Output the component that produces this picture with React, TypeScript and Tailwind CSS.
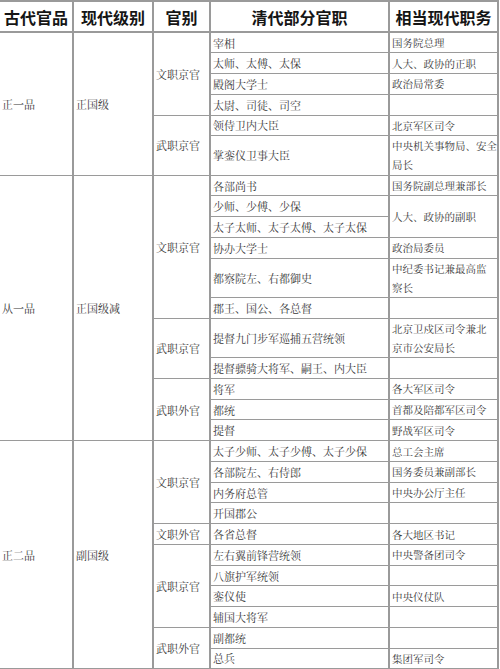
type Row = {
  title: string;
  modern?: string | string[] | null;
  modernSpan?: number;
  tall?: boolean;
};

type Section = { type: string; rows: Row[] };
type Group = { rank: string; level: string; sections: Section[] };

const groups: Group[] = [
  {
    rank: "正一品",
    level: "正国级",
    sections: [
      {
        type: "文职京官",
        rows: [
          { title: "宰相", modern: "国务院总理" },
          { title: "太师、太傅、太保", modern: "人大、政协的正职" },
          { title: "殿阁大学士", modern: "政治局常委" },
          { title: "太尉、司徒、司空", modern: "" },
        ],
      },
      {
        type: "武职京官",
        rows: [
          { title: "领侍卫内大臣", modern: "北京军区司令" },
          { title: "掌銮仪卫事大臣", modern: ["中央机关事物局、安全", "局长"], tall: true },
        ],
      },
    ],
  },
  {
    rank: "从一品",
    level: "正国级减",
    sections: [
      {
        type: "文职京官",
        rows: [
          { title: "各部尚书", modern: "国务院副总理兼部长" },
          { title: "少师、少傅、少保", modern: "人大、政协的副职", modernSpan: 2 },
          { title: "太子太师、太子太傅、太子太保", modern: null },
          { title: "协办大学士", modern: "政治局委员" },
          { title: "都察院左、右都御史", modern: ["中纪委书记兼最高监", "察长"], tall: true },
          { title: "郡王、国公、各总督", modern: "" },
        ],
      },
      {
        type: "武职京官",
        rows: [
          { title: "提督九门步军巡捕五营统领", modern: ["北京卫戍区司令兼北", "京市公安局长"], tall: true },
          { title: "提督骠骑大将军、嗣王、内大臣", modern: "" },
        ],
      },
      {
        type: "武职外官",
        rows: [
          { title: "将军", modern: "各大军区司令" },
          { title: "都统", modern: "首都及陪都军区司令" },
          { title: "提督", modern: "野战军区司令" },
        ],
      },
    ],
  },
  {
    rank: "正二品",
    level: "副国级",
    sections: [
      {
        type: "文职京官",
        rows: [
          { title: "太子少师、太子少傅、太子少保", modern: "总工会主席" },
          { title: "各部院左、右侍郎", modern: "国务委员兼副部长" },
          { title: "内务府总管", modern: "中央办公厅主任" },
          { title: "开国郡公", modern: "" },
        ],
      },
      {
        type: "文职外官",
        rows: [{ title: "各省总督", modern: "各大地区书记" }],
      },
      {
        type: "武职京官",
        rows: [
          { title: "左右翼前锋营统领", modern: "中央警备团司令" },
          { title: "八旗护军统领", modern: "" },
          { title: "銮仪使", modern: "中央仪仗队" },
          { title: "辅国大将军", modern: "" },
        ],
      },
      {
        type: "武职外官",
        rows: [
          { title: "副都统", modern: "" },
          { title: "总兵", modern: "集团军司令" },
        ],
      },
    ],
  },
];

const headers = ["古代官品", "现代级别", "官别", "清代部分官职", "相当现代职务"];

const cell = "border-y border-x-2 border-[#9a9a9a] px-[2px] py-0 text-left align-middle";

export default function App() {
  const body: React.ReactNode[] = [];

  groups.forEach((group, gi) => {
    const groupRows = group.sections.reduce((n, s) => n + s.rows.length, 0);
    group.sections.forEach((section, si) => {
      section.rows.forEach((row, ri) => {
        const firstInGroup = si === 0 && ri === 0;
        body.push(
          <tr className={row.tall ? "h-[39.4px]" : "h-[20.75px]"} key={`${gi}-${si}-${ri}`}>
            {firstInGroup ? (
              <td className={`${cell} border-l-0`} rowSpan={groupRows}>
                {group.rank}
              </td>
            ) : null}
            {firstInGroup ? (
              <td className={cell} rowSpan={groupRows}>
                {group.level}
              </td>
            ) : null}
            {ri === 0 ? (
              <td className={cell} rowSpan={section.rows.length}>
                {section.type}
              </td>
            ) : null}
            <td className={`${cell} whitespace-nowrap`}>{row.title}</td>
            {row.modern === null ? null : (
              <td
                className={`${cell} whitespace-nowrap text-[10.5px] leading-[19px]`}
                rowSpan={row.modernSpan ?? 1}
              >
                {Array.isArray(row.modern)
                  ? row.modern.map((line, i) => (
                      <span className="block" key={i}>
                        {line}
                      </span>
                    ))
                  : row.modern}
              </td>
            )}
          </tr>
        );
      });
    });
  });

  return (
    <div className="h-[669px] w-[500px] overflow-hidden bg-white">
      <table
        className="w-[498px] table-fixed border-collapse text-[11px] leading-[16px] text-[#3a3a3a]"
        style={{ fontFamily: '"Noto Serif CJK SC", "Noto Sans CJK SC", serif' }}
      >
        <colgroup>
          <col className="w-[73px]" />
          <col className="w-[80px]" />
          <col className="w-[57px]" />
          <col className="w-[179px]" />
          <col className="w-[109px]" />
        </colgroup>
        <thead>
          <tr className="h-[31px]">
            {headers.map((h, i) => (
              <th
                className={`border-y-2 border-x-2 border-[#9a9a9a] p-0 text-center align-middle text-[16px] font-bold leading-[20px] text-[#151515] ${
                  i === 0 ? "border-l-0" : ""
                }`}
                key={h}
                style={{ fontFamily: '"Noto Sans CJK SC", sans-serif' }}
              >
                {h}
              </th>
            ))}
          </tr>
        </thead>
        <tbody className="border-b-2 border-[#9a9a9a]">{body}</tbody>
      </table>
    </div>
  );
}
